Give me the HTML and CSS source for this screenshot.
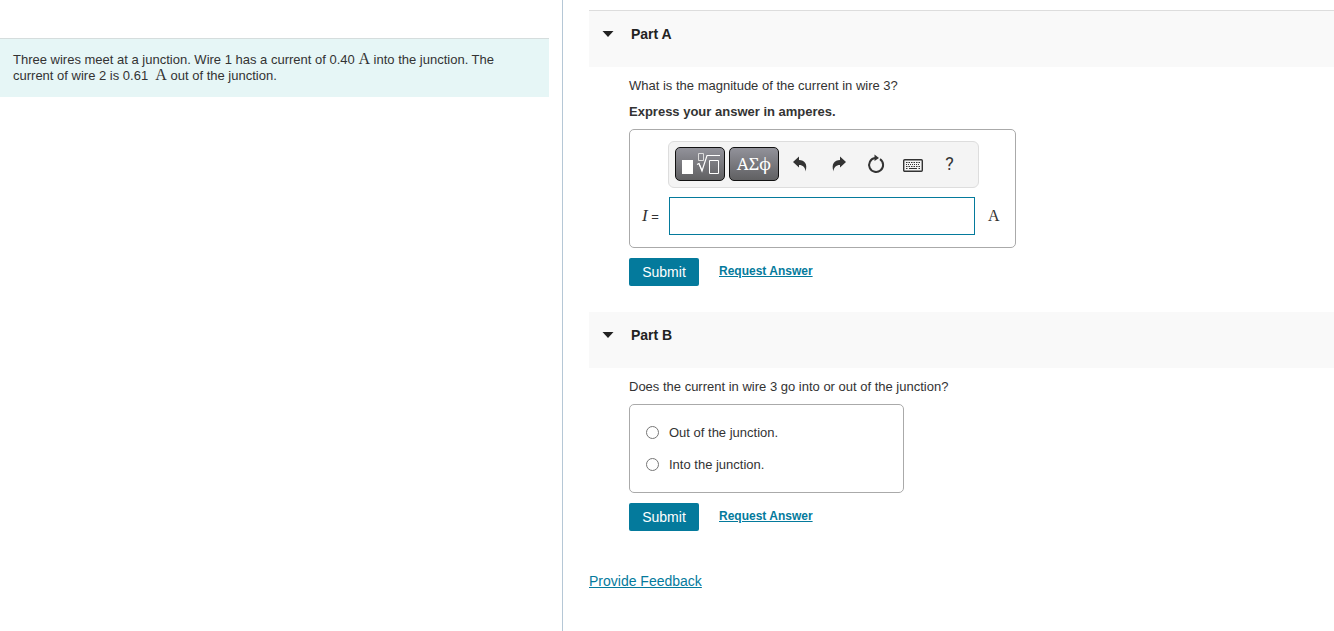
FILE: index.html
```html
<!DOCTYPE html>
<html lang="en">
<head>
  <meta charset="UTF-8">
  <meta name="viewport" content="width=device-width, initial-scale=1.0">
  <title>Wires at a Junction</title>
  <link rel="stylesheet" href="styles.css">
</head>
<body>
  <!-- Problem statement -->
  <aside class="problem">
    <p class="problem-text">Three wires meet at a junction. Wire 1 has a current of 0.40 <span class="unit">A</span> into the junction. The current of wire 2 is 0.61 &nbsp;<span class="unit">A</span> out of the junction.</p>
  </aside>

  <!-- Questions -->
  <main class="parts">
    <section class="part part-first">
      <header class="part-header">
        <svg class="arrow" width="12" height="6" viewBox="0 0 12 6"><path d="M0.500 0H11.500L6 6Z"/></svg>
        <h2>Part A</h2>
      </header>
      <form class="part-body">
        <p>What is the magnitude of the current in wire 3?</p>
        <p class="instructions">Express your answer in amperes.</p>
        <div class="answer-box">
          <div class="toolbar">
            <button type="button" class="palette" aria-label="Templates">
              <svg width="40" height="24" viewBox="0 0 40 24" fill="none" stroke="#fff">
                <rect x="2" y="8" width="11" height="14" fill="#fff" stroke="none"/>
                <path d="M18.500 1.500h5v7h-5z" stroke="#ddd"/>
                <path d="M17 12.500l2-1L22 19L27 3.500H40" stroke-width="1.200"/>
                <path d="M19 11.500L22 18.500"/>
                <path d="M29.500 8.500h9v13h-9z"/>
              </svg>
            </button>
            <button type="button" class="palette greek" aria-label="Symbols">ΑΣϕ</button>
            <button type="button" class="tool tool-undo" aria-label="Undo">
              <svg width="16" height="18" viewBox="0 0 16 18"><path d="M1 7L7 1.500V5C12.500 5 16 9 13.500 16.500C13.300 12.500 11 10 7 10V12.500Z"/></svg>
            </button>
            <button type="button" class="tool" aria-label="Redo">
              <svg width="16" height="18" viewBox="0 0 16 18"><path d="M15 7L9 1.500V5C3.500 5 0 9 2.500 16.500C2.700 12.500 5 10 9 10V12.500Z"/></svg>
            </button>
            <button type="button" class="tool" aria-label="Reset">
              <svg width="18" height="20" viewBox="0 0 18 20">
                <path d="M13 5.200A7 7 0 1 1 8 4.100" fill="none" stroke="#333" stroke-width="2"/>
                <path d="M7.500 0.500L12 4L7.500 7Z"/>
              </svg>
            </button>
            <button type="button" class="tool" aria-label="Keyboard shortcuts">
              <svg class="keyboard" width="20" height="13" viewBox="0 0 20 13" fill="none" stroke="#333">
                <rect x="0.700" y="0.700" width="18.600" height="11.600" rx="1" stroke-width="1.400"/>
                <path d="M3 3.500H17" stroke-dasharray="1.500 1"/>
                <path d="M3 5.500H17" stroke-dasharray="1 1"/>
                <path d="M3 7.500H17" stroke-dasharray="1.500 1"/>
                <path d="M3 9.500H4.500M6 9.500H14M15.500 9.500H17"/>
              </svg>
            </button>
            <button type="button" class="tool help" aria-label="Help">?</button>
          </div>
          <div class="answer-row">
            <label for="current"><i>I</i> =</label>
            <input type="text" id="current" name="current">
            <span class="unit">A</span>
          </div>
        </div>
        <div class="actions">
          <button type="submit" class="submit">Submit</button>
          <a href="#">Request Answer</a>
        </div>
      </form>
    </section>

    <section class="part">
      <header class="part-header">
        <svg class="arrow" width="12" height="6" viewBox="0 0 12 6"><path d="M0.500 0H11.500L6 6Z"/></svg>
        <h2>Part B</h2>
      </header>
      <form class="part-body">
        <p>Does the current in wire 3 go into or out of the junction?</p>
        <div class="choices">
          <div class="choice">
            <input type="radio" id="out" name="direction">
            <label for="out">Out of the junction.</label>
          </div>
          <div class="choice">
            <input type="radio" id="into" name="direction">
            <label for="into">Into the junction.</label>
          </div>
        </div>
        <div class="actions">
          <button type="submit" class="submit">Submit</button>
          <a href="#">Request Answer</a>
        </div>
      </form>
    </section>

    <a href="#" class="feedback">Provide Feedback</a>
  </main>
</body>
</html>
```

FILE: styles.css
```css
* {
  box-sizing: border-box;
}
body {
  display: grid;
  grid-template-columns: 563fr 771fr;
  min-height: 100vh;
  margin: 0;
  font-family: "Liberation Sans", Arial, sans-serif;
  font-size: 13px;
  line-height: 16px;
  color: #333;
  background-color: #fff;
}
p {
  margin: 0 0 9px;
}
a {
  color: #047a9c;
}

/* Left side */
.problem {
  padding: 38px 13px 0 0;
  border-right: 1px solid #b5c7d6;
}
.problem-text {
  margin: 0;
  padding: 13px 40px 13px 13px;
  border-top: 1px solid #d5dddd;
  background-color: #e6f6f6;
}
.unit {
  font-family: "Liberation Serif", "Times New Roman", serif;
  font-size: 16px;
  line-height: 1;
}
.problem-text .unit {
  line-height: 0;
}

/* Right side */
.parts {
  padding: 10px 0 40px 26px;
}
.part-first {
  border-top: 1px solid #ddd;
}
.part-header {
  display: flex;
  align-items: flex-start;
  gap: 17px;
  height: 56px;
  padding: 15px 13px;
  background-color: #f9f9f9;
}
.part-header h2 {
  margin: 0;
  font-size: 14px;
  color: #222;
}
.arrow {
  margin-top: 5px;
  fill: #222;
}
.part-body {
  padding: 11px 16px 26px 40px;
}
.instructions {
  margin-top: 10px;
  font-weight: bold;
}
.answer-box {
  width: 387px;
  max-width: 100%;
  padding: 11px 12px 12px;
  border: 1px solid #aaa;
  border-radius: 5px;
}
.toolbar {
  display: flex;
  align-items: center;
  width: 311px;
  height: 47px;
  margin: 0 0 9px 26px;
  padding: 0 6px 2px;
  border: 1px solid #ddd;
  border-radius: 6px;
  background-color: #f4f4f4;
}
.palette {
  width: 50px;
  height: 34px;
  margin-right: 4px;
  padding: 0;
  border: 1px solid #111;
  border-radius: 5px;
  background: linear-gradient(#92929a, #606062);
  color: #fff;
}
.palette svg {
  display: block;
  margin: 0 auto;
}
.greek {
  font-family: "Noto Serif", "Liberation Serif", serif;
  font-size: 17px;
}
.tool {
  display: flex;
  align-items: center;
  justify-content: center;
  width: 37px;
  height: 34px;
  padding: 0;
  border: none;
  background: none;
  color: #333;
}
.tool-undo {
  justify-content: flex-start;
  padding-left: 9px;
}
.tool svg {
  fill: #333;
}
.tool .keyboard {
  margin-top: 4px;
  fill: none;
}
.help {
  font-family: Roboto, sans-serif;
  font-size: 18px;
}
.answer-row {
  display: flex;
  align-items: center;
}
.answer-row label {
  width: 27px;
}
.answer-row i {
  font-family: "Liberation Serif", "Times New Roman", serif;
  font-size: 17px;
}
.answer-row input {
  width: 306px;
  height: 38px;
  margin-right: 13px;
  padding: 0 8px;
  border: 1px solid #047a9c;
  font-size: 16px;
}
.actions {
  display: flex;
  align-items: center;
  gap: 20px;
  margin-top: 10px;
}
.submit {
  width: 70px;
  height: 28px;
  padding: 0;
  border: none;
  border-radius: 2px;
  background-color: #047a9c;
  color: #fff;
  font-family: inherit;
  font-size: 14px;
  cursor: pointer;
}
.actions a {
  padding-bottom: 2px;
  font-size: 12px;
  font-weight: bold;
}
.choices {
  display: flex;
  flex-direction: column;
  gap: 16px;
  width: 275px;
  padding: 20px 16px 19px;
  border: 1px solid #aaa;
  border-radius: 5px;
}
.choice {
  display: flex;
  align-items: flex-start;
  gap: 10px;
}
.choice input {
  width: 13px;
  height: 13px;
  margin: 1px 0 0;
}
.feedback {
  display: inline-block;
  margin-top: 16px;
  font-size: 14px;
}
```
